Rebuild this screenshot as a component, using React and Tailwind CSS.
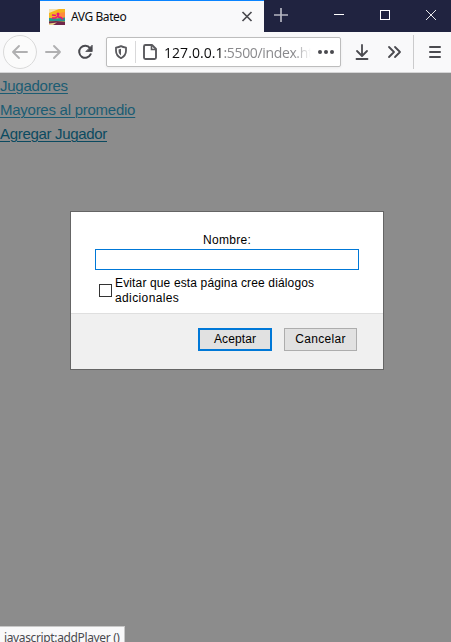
function Favicon() {
  return (
    <svg width="16" height="16" viewBox="0 0 16 16" className="shrink-0">
      <rect width="16" height="16" fill="#f5b51e" />
      <path d="M0 0h10L0 4z" fill="#f3e0ad" />
      <path d="M10 4l6-1v6H8z" fill="#ff8a3c" />
      <path d="M0 9l8 .500 8-1v4H0z" fill="#27958f" />
      <path d="M0 12.500l7-.500 9 1v3H0z" fill="#71264b" />
      <path d="M0 14.500l8-1-4 2.500H0z" fill="#e8d08a" />
      <path d="M3 6l4 .500M9 5v2L6.500 9H3M9 8l3 .5 2 2" stroke="#e5137d" strokeWidth="1.500" fill="none" />
      <circle cx="9" cy="5" r="1.500" fill="#e5137d" />
    </svg>
  );
}

function TabStrip() {
  return (
    <header className="flex h-8 bg-[#202340]">
      <div className="ml-10 flex w-[224px] items-center border-t border-[#0a84ff] bg-[#f9f9fa] pl-[9px]">
        <Favicon />
        <span className="ml-[6px] w-[168px] font-['Noto_Sans','Open_Sans',sans-serif] text-[12px] leading-4 tracking-[-0.42px] whitespace-nowrap text-[#0c0c0d]">
          AVG Bateo
        </span>
        <svg width="16" height="16" viewBox="0 0 16 16" className="shrink-0" fill="none" stroke="#4a4a4f" strokeWidth="1.7">
          <path d="M3.5 3l9 9M12.5 3l-9 9" />
        </svg>
      </div>
      <svg width="187" height="32" viewBox="264 0 187 32" fill="none" stroke="#fff">
        <path d="M274 15h14M281 8v14" stroke="#b5b6c1" strokeWidth="1.7" />
        <path d="M334 14.5h10" />
        <rect x="380.5" y="10.5" width="9" height="9" />
        <path d="M426 10l10 10M436 10l-10 10" strokeWidth="0.9" />
      </svg>
    </header>
  );
}

function NavIcons() {
  return (
    <svg width="106" height="40" viewBox="0 32 106 40" fill="none" className="shrink-0" strokeLinecap="round" strokeLinejoin="round">
      <circle cx="20" cy="52" r="16.5" fill="#fbfbfb" stroke="#dadada" />
      <g stroke="#b0b0b1" strokeWidth="1.9">
        <path d="M27 52H13M19 46l-6 6 6 6" />
        <path d="M46 52h14M54 46l6 6-6 6" />
      </g>
      <path d="M90 48.2A6 6 0 1 0 90.7 54.2" stroke="#4a4a4f" strokeWidth="2" />
      <path d="M92.2 45.5v6h-6z" fill="#4a4a4f" stroke="#4a4a4f" strokeWidth="0.8" />
    </svg>
  );
}

function AddressBar() {
  return (
    <div className="flex h-[30px] w-[235px] shrink-0 items-center overflow-hidden rounded-[2px] border border-[#bdbdbd] bg-white shadow-[0_1px_3px_rgba(0,0,0,0.06)]">
      <svg width="57" height="28" viewBox="107 38 57 28" fill="none" className="shrink-0">
        <path d="M121 46.1c1.7 1 3.4 1.3 5 1.5v3.2c0 3.5-1.8 5.8-5 7.4-3.2-1.6-5-3.9-5-7.4v-3.2c1.6-.2 3.3-.5 5-1.5z" stroke="#5a5a5e" strokeWidth="1.8" strokeLinejoin="round" />
        <path d="M121 48.7v6.800c-1.600-1.100-2.400-2.500-2.400-4.500v-1.600z" fill="#5a5a5e" />
        <path d="M135.500 41v22" stroke="#d9d9da" />
        <path d="M145.500 45h6.500l4 4v8.500q0 1.500-1.500 1.500h-9q-1.500 0-1.500-1.500v-11q0-1.500 1.500-1.500z" stroke="#5a5a5e" strokeWidth="1.900" strokeLinejoin="round" />
        <path d="M151.500 45v4.500h4.500" stroke="#5a5a5e" strokeWidth="1.600" />
      </svg>
      <div className="w-[147px] overflow-hidden mask-r-from-88% pt-[2px] font-['Open_Sans','Noto_Sans',sans-serif] text-[14px] leading-[24px] tracking-[-0.35px] whitespace-nowrap text-[#8a8a8d]">
        <span className="tracking-[0.05px] text-[#0c0c0d]">127.0.0.1</span>:5500/index.html
      </div>
      <svg width="29" height="28" viewBox="311 38 29 28" className="shrink-0" fill="#4a4a4f">
        <circle cx="320" cy="52" r="2" />
        <circle cx="326" cy="52" r="2" />
        <circle cx="332" cy="52" r="2" />
      </svg>
    </div>
  );
}

function Toolbar() {
  return (
    <nav className="flex h-[41px] items-center border-b border-[#d5d5d6] bg-[#f9f9fa]">
      <NavIcons />
      <AddressBar />
      <svg width="110" height="40" viewBox="341 32 110 40" fill="none" className="shrink-0" stroke="#4a4a4f" strokeWidth="1.8" strokeLinecap="round" strokeLinejoin="round">
        <path d="M362 45v10M357 51l5 5 5-5M356.500 59h11" />
        <path d="M389 47l5 5-5 5M395 47l5 5-5 5" />
        <path d="M413.500 35v34" stroke="#cbcbcc" strokeWidth="1" strokeLinecap="butt" />
        <path d="M430 47h10M430 52h10M430 57h10" strokeWidth="2" />
      </svg>
    </nav>
  );
}

function PromptDialog() {
  return (
    <section className="ml-[70px] mt-[65px] h-[159px] w-[314px] border border-[#656565] bg-[#f0f0f0] font-['Liberation_Sans',Arial,sans-serif] text-[12px] text-black">
      <div className="h-[102px] border-b border-[#dfdfdf] bg-white pt-[20px] pl-6">
        <label htmlFor="nombre" className="block w-[264px] text-center leading-4 tracking-[0.3px]">
          Nombre:
        </label>
        <input id="nombre" className="mt-px block h-[21px] w-[264px] border border-[#0078d7] bg-white outline-none" />
        <div className="mt-[6px] flex pl-1">
          <span className="mt-[8px] mr-[3px] h-[13px] w-[13px] shrink-0 border border-[#333]" />
          <p className="leading-[15px] tracking-[0.14px] whitespace-nowrap">
            Evitar que esta página cree diálogos
            <br />
            <span className="tracking-[0.38px]">adicionales</span>
          </p>
        </div>
      </div>
      <div className="flex gap-3 pt-[14px] pl-[127px]">
        <button className="h-[23px] w-[74px] border-2 border-[#0078d7] bg-[#e1e1e1] pb-px leading-[18px] tracking-[0.1px]">Aceptar</button>
        <button className="h-[23px] w-[73px] border border-[#adadad] bg-[#e1e1e1] leading-[19px] tracking-[0.3px]">Cancelar</button>
      </div>
    </section>
  );
}

export default function App() {
  return (
    <div className="flex h-[642px] w-[451px] flex-col overflow-hidden bg-[#8c8c8c]">
      <TabStrip />
      <Toolbar />
      <main className="grow">
        <div className="flex flex-col items-start pt-px font-['Liberation_Sans',Arial,sans-serif] text-[15px] leading-6 tracking-[-0.26px] text-[#1b5c73] underline decoration-1 underline-offset-2">
          <a href="#jugadores">Jugadores</a>
          <a href="#promedio">Mayores al promedio</a>
          <a href="#agregar" className="tracking-[-0.32px] text-[#0b4a60]">Agregar Jugador</a>
        </div>
        <PromptDialog />
      </main>
      <footer className="h-4 w-[125px] shrink-0 overflow-hidden border-t border-r border-[#c8c8c8] bg-[#f9f9fa] pt-[3px] pl-1 font-['Noto_Sans','Open_Sans',sans-serif] text-[12px] leading-4 tracking-[-0.36px] whitespace-nowrap text-[#4a4a4f]">
        javascript:addPlayer ()
      </footer>
    </div>
  );
}
